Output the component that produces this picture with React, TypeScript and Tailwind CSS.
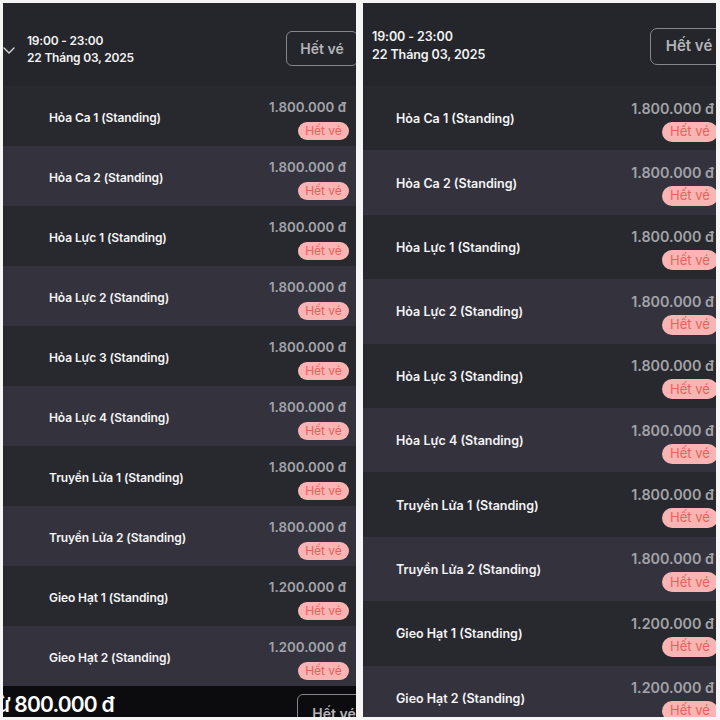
import React from "react";

const tickets = [
  { name: "Hỏa Ca 1 (Standing)", price: "1.800.000 đ" },
  { name: "Hỏa Ca 2 (Standing)", price: "1.800.000 đ" },
  { name: "Hỏa Lực 1 (Standing)", price: "1.800.000 đ" },
  { name: "Hỏa Lực 2 (Standing)", price: "1.800.000 đ" },
  { name: "Hỏa Lực 3 (Standing)", price: "1.800.000 đ" },
  { name: "Hỏa Lực 4 (Standing)", price: "1.800.000 đ" },
  { name: "Truyền Lửa 1 (Standing)", price: "1.800.000 đ" },
  { name: "Truyền Lửa 2 (Standing)", price: "1.800.000 đ" },
  { name: "Gieo Hạt 1 (Standing)", price: "1.200.000 đ" },
  { name: "Gieo Hạt 2 (Standing)", price: "1.200.000 đ" },
];

// class sets for the two screenshots (right one is zoomed a little)
const small = {
  header: "h-[83px] pt-[8px] pl-[24px]",
  headText: "text-[12px] leading-[17px] tracking-[-0.2px]",
  headBtn: "w-[72px] h-[35px] -mr-[2px] text-[14px] rounded-[6px]",
  row: "h-[60px] pl-[46px] pr-[7px]",
  label: "text-[12px] tracking-[-0.1px] mt-[3px]",
  col: "mt-[6px]",
  price: "text-[13.3px] leading-[17px] mr-[3px]",
  badge: "h-[18px] w-[51px] text-[12px] mt-[6px]",
};

const big = {
  header: "h-[83px] pt-[3px] pl-[9px]",
  headText: "text-[12.5px] leading-[18px] tracking-[-0.1px]",
  headBtn: "w-[78px] h-[37px] -mr-[12px] text-[15px] rounded-[7px]",
  row: "h-[64.4px] pl-[33px] pr-[0px]",
  label: "text-[12.5px] mt-[3px]",
  col: "mt-[5px]",
  price: "text-[14.3px] leading-[18px] mr-[2px]",
  badge: "h-[20px] w-[56px] text-[13px] mt-[4px] -mr-[2px]",
};

function Panel({ s, chevron, footer }: { s: typeof small; chevron?: boolean; footer?: boolean }) {
  return (
    <div className="w-[353px] h-[714px] flex flex-col overflow-hidden bg-[#27282d]">
      {/* show header */}
      <div className={`shrink-0 flex items-center justify-between bg-[#25262b] relative ${s.header}`}>
        {chevron && (
          <svg className="absolute left-[0px] top-[41px]" width="12" height="12" viewBox="0 0 12 12" fill="none">
            <path d="M1 4l5 5 5-5" stroke="#d8d8da" strokeWidth="1.4" strokeLinecap="round" strokeLinejoin="round" />
          </svg>
        )}
        <div className={`font-semibold text-[#f2f2f3] ${s.headText}`}>
          <div>19:00 - 23:00</div>
          <div>22 Tháng 03, 2025</div>
        </div>
        <div
          className={`shrink-0 border border-[#85858b] flex items-center justify-center font-semibold text-[#b4b4b8] ${s.headBtn}`}
        >
          Hết vé
        </div>
      </div>

      {tickets.map((t, i) => (
        <div
          key={t.name}
          className={`shrink-0 flex items-center justify-between ${i % 2 ? "bg-[#34333d]" : "bg-[#28292e]"} ${s.row}`}
        >
          <span className={`font-semibold text-[#f4f4f5] ${s.label}`}>{t.name}</span>
          <div className={`flex flex-col items-end ${s.col}`}>
            <span className={`font-semibold text-[#a3a3a9] ${s.price}`}>{t.price}</span>
            <span
              className={`rounded-full bg-[#f8b5b3] text-[#e5625c] flex items-center justify-center ${s.badge}`}
            >
              Hết vé
            </span>
          </div>
        </div>
      ))}

      {footer && (
        <div className="flex-1 shrink-0 bg-[#0c0c0e] flex justify-between items-start overflow-hidden">
          <span className="-ml-[6px] mt-[6px] text-[21px] leading-[26px] tracking-[-0.8px] font-semibold text-white">
            ừ 800.000 đ
          </span>
          <div className="shrink-0 -mr-[15px] mt-[8px] w-[74px] h-[40px] rounded-[6px] border border-[#85858b] flex justify-center pt-[8px] text-[14px] font-semibold text-[#b4b4b8]">
            Hết vé
          </div>
        </div>
      )}
    </div>
  );
}

export default function App() {
  return (
    <div
      className="w-[720px] h-[720px] bg-[#f4f5f4] flex gap-[7px] pl-[3px] pt-[3px] overflow-hidden"
      style={{ fontFamily: "Inter, 'Noto Sans', sans-serif" }}
    >
      <Panel s={small} chevron footer />
      <Panel s={big} />
    </div>
  );
}
